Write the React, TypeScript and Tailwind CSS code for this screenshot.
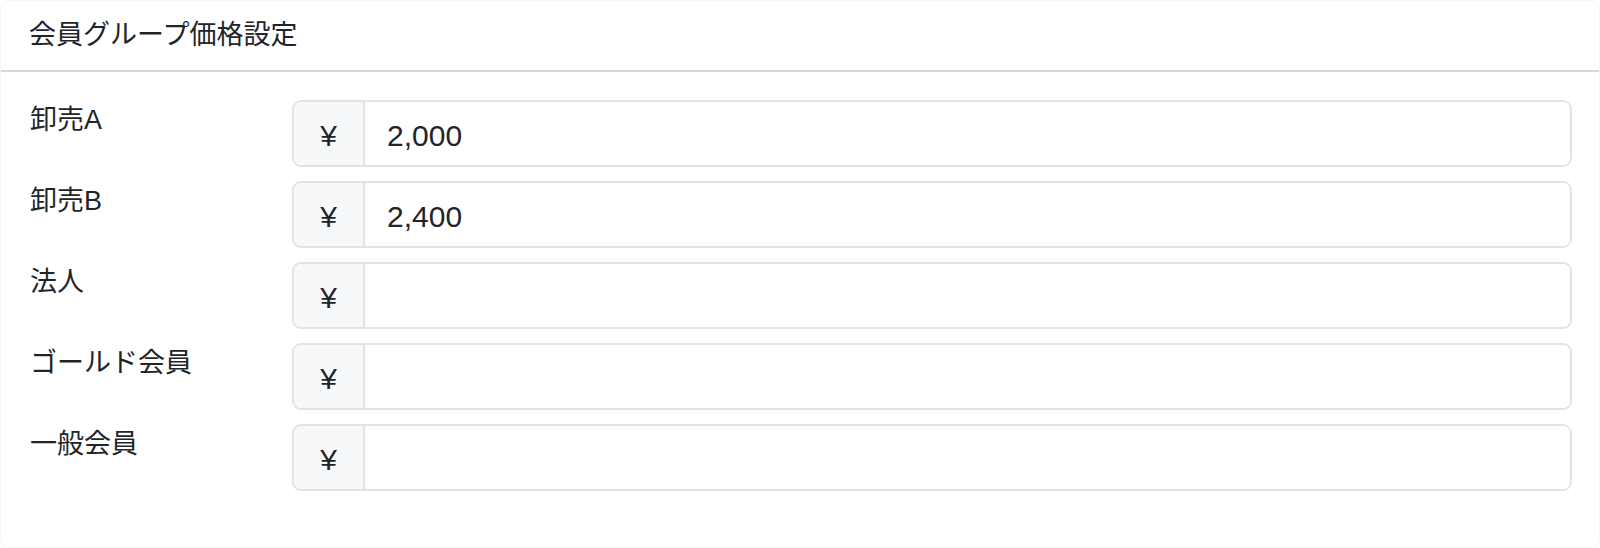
const groups = [
  { name: "卸売A", price: "2,000" },
  { name: "卸売B", price: "2,400" },
  { name: "法人", price: "" },
  { name: "ゴールド会員", price: "" },
  { name: "一般会員", price: "" },
]

const font = { fontFamily: '"Liberation Sans", "Noto Sans CJK JP", sans-serif' }

export default function App() {
  return (
    <div className="w-[1600px] h-[548px] bg-white text-[#212529]" style={font}>
      <div className="h-full rounded-lg border border-[#f6f6f6] bg-white overflow-hidden">
        <div className="h-[71px] flex items-center px-[28px] border-b-2 border-[#d7d7d7]">
          <h2 className="text-[27px] leading-none">会員グループ価格設定</h2>
        </div>
        <div className="pt-[28px] pl-[29px] pr-[27px] flex flex-col gap-[14px]">
          {groups.map((g) => (
            <div key={g.name} className="flex items-start">
              <label className="w-[262px] shrink-0 text-[27px] leading-[40px]">{g.name}</label>
              <div className="flex-1 h-[67px] flex rounded-[9px] border-2 border-[#e3e3e3] overflow-hidden">
                <span className="w-[71px] shrink-0 flex items-center justify-center pt-[4px] bg-[#f7f8f9] border-r-2 border-[#e3e3e3] text-[30px]">
                  ¥
                </span>
                <input
                  defaultValue={g.price}
                  className="flex-1 min-w-0 pl-[22px] pt-[4px] text-[30px] bg-white outline-none text-[#212529]"
                  style={font}
                />
              </div>
            </div>
          ))}
        </div>
      </div>
    </div>
  )
}
